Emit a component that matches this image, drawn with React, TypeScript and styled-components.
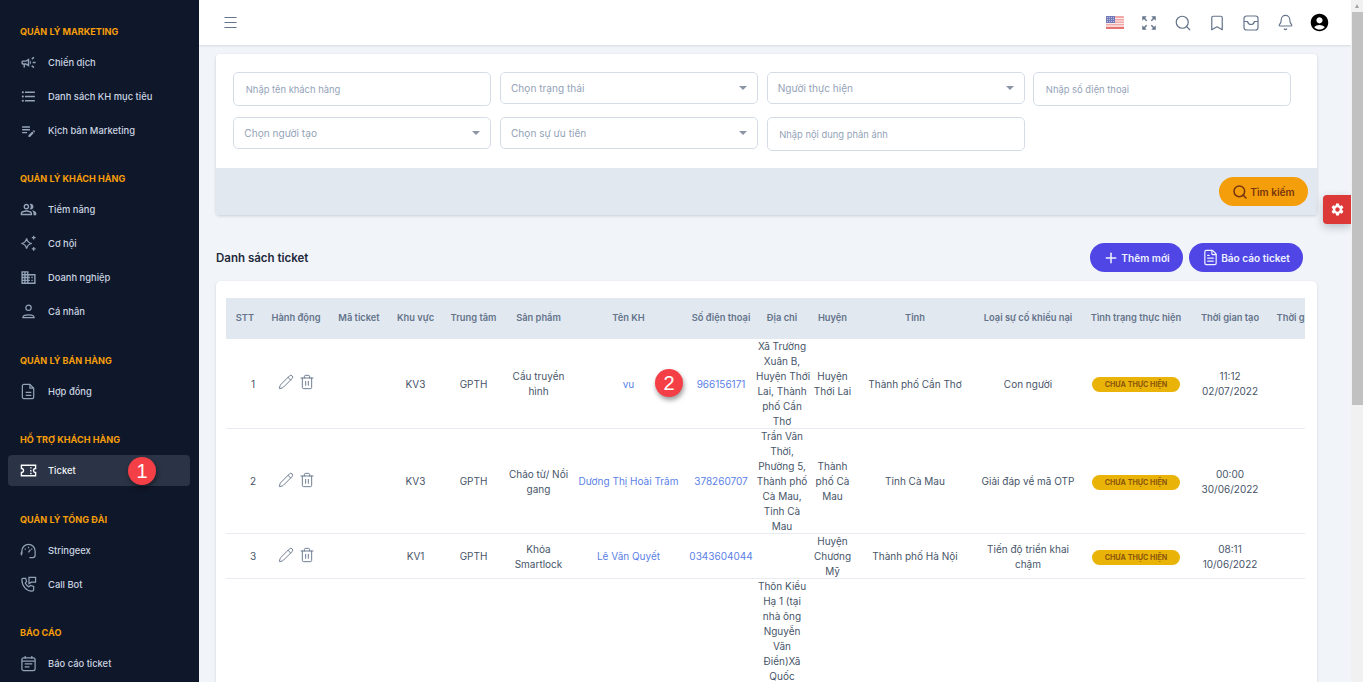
import React from "react";
import styled, { createGlobalStyle } from "styled-components";
import { Bell, Bookmark, FileText, Menu, Pencil, Plus, Search, Trash2 } from "lucide-react";
import {
  MdAccountCircle,
  MdOutlineCampaign,
  MdOutlineDomain,
  MdOutlineEditNote,
  MdOutlineFormatListBulleted,
  MdOutlinePeopleAlt,
  MdOutlineZoomOutMap,
  MdSettings,
} from "react-icons/md";

const FONT = `Inter, "Noto Sans", "Liberation Sans", sans-serif`;

const GlobalStyle = createGlobalStyle`
  html, body {
    margin: 0;
    height: 100%;
    overflow: hidden;
    background: #f1f5f9;
    font-family: ${FONT};
  }
  * { box-sizing: border-box; }
`;

const SparkIcon = () => (
  <svg viewBox="0 0 18 18" fill="none" stroke="currentColor" strokeWidth="1.3">
    <path d="M7 3.500c.6 3.200 2.200 4.900 5.500 5.500-3.300.6-4.900 2.300-5.500 5.500-.6-3.200-2.200-4.900-5.500-5.500 3.300-.6 4.900-2.300 5.500-5.500z" />
    <path d="M14.500 .8v4M12.500 2.800h4M14.500 12.800v4M12.500 14.800h4" />
  </svg>
);

const PersonIcon = () => (
  <svg viewBox="0 0 18 18" fill="none" stroke="currentColor" strokeWidth="1.3">
    <circle cx="9" cy="5" r="2.800" />
    <path d="M3 15.500c0-2 2-3 6-3s6 1 6 3z" />
  </svg>
);

const DocIcon = () => (
  <svg viewBox="0 0 18 18" fill="none" stroke="currentColor" strokeWidth="1.3">
    <path d="M4 1.500h6.500l4 4V15a1.500 1.500 0 0 1-1.500 1.500H4A1.500 1.500 0 0 1 2.500 15V3A1.500 1.500 0 0 1 4 1.500z" />
    <path d="M10.500 1.500v4h4M6 10h6M6 13h6" />
  </svg>
);

const TicketIcon = () => (
  <svg viewBox="0 0 18 18" fill="none" stroke="currentColor" strokeWidth="1.500">
    <path d="M1.500 3.500h15v3.300a2.200 2.200 0 0 0 0 4.400v3.300h-15v-3.300a2.200 2.200 0 0 0 0-4.400z" />
    <path d="M11.500 5.500v1.500M11.500 8.500v1.500M11.500 11.500v1.500" />
  </svg>
);

const HeadsetIcon = () => (
  <svg viewBox="0 0 18 18" fill="none" stroke="currentColor" strokeWidth="1.300">
    <path d="M2 13V9.500a7 7 0 0 1 14 0V14c0 1.500-1 2.500-2.500 2.500H10" />
    <path d="M2 10.500c-1 .5-1 3 0 3.500M5 7l1 1M9 5v1.500M13 7l-1 1M9 11l2-3" />
  </svg>
);

const CallBotIcon = () => (
  <svg viewBox="0 0 18 18" fill="none" stroke="currentColor" strokeWidth="1.300">
    <path d="M3 2.500h3l1 3.500-1.500 1.500c.8 1.800 2.200 3.200 4 4L11 10l3.500 1v3c0 1-1 2-2 2C7 16 2 11 2 4c0-1 .5-1.500 1-1.500z" />
    <path d="M9.500 1.500h7v5h-4.500l-2.500 1.500z" />
  </svg>
);

const ReportIcon = () => (
  <svg viewBox="0 0 18 18" fill="none" stroke="currentColor" strokeWidth="1.300">
    <rect x="2" y="3" width="14" height="13.500" rx="2" />
    <path d="M5.500 1v3M12.500 1v3M2 6.500h14M5 9.500h8M5 12.500h5" />
  </svg>
);

const InboxIcon = () => (
  <svg viewBox="0 0 18 18" width="18" height="18" fill="none" stroke="currentColor" strokeWidth="1.200">
    <rect x="2" y="2" width="14" height="14" rx="2.500" />
    <path d="M2 7.500h3.500c.5 2 2 3 3.500 3s3-1 3.500-3H16" />
  </svg>
);

const FlagIcon = () => (
  <svg viewBox="0 0 18 13" width="18" height="13">
    <rect width="18" height="13" rx="1" fill="#f1a8a8" />
    <path d="M0 2.500h18M0 5h18M0 7.500h18" stroke="#fbe9e9" strokeWidth="1" />
    <path d="M0 10h18" stroke="#fff" strokeWidth="1" />
    <path d="M0 12h18" stroke="#e15b5b" strokeWidth="1.400" />
    <rect width="9" height="7" fill="#7179b8" />
    <path d="M1 1.500h7M1 3.500h7M1 5.500h7" stroke="#d5d8ee" strokeWidth=".8" strokeDasharray="1 1" />
  </svg>
);

type NavEntry = { label: string; icon: React.ReactNode; active?: boolean };
type NavGroup = { title: string; items: NavEntry[] };

const NAV: NavGroup[] = [
  {
    title: "QUẢN LÝ MARKETING",
    items: [
      { label: "Chiến dịch", icon: <MdOutlineCampaign /> },
      { label: "Danh sách KH mục tiêu", icon: <MdOutlineFormatListBulleted /> },
      { label: "Kịch bản Marketing", icon: <MdOutlineEditNote /> },
    ],
  },
  {
    title: "QUẢN LÝ KHÁCH HÀNG",
    items: [
      { label: "Tiềm năng", icon: <MdOutlinePeopleAlt /> },
      { label: "Cơ hội", icon: <SparkIcon /> },
      { label: "Doanh nghiệp", icon: <MdOutlineDomain /> },
      { label: "Cá nhân", icon: <PersonIcon /> },
    ],
  },
  { title: "QUẢN LÝ BÁN HÀNG", items: [{ label: "Hợp đồng", icon: <DocIcon /> }] },
  { title: "HỖ TRỢ KHÁCH HÀNG", items: [{ label: "Ticket", icon: <TicketIcon />, active: true }] },
  {
    title: "QUẢN LÝ TỔNG ĐÀI",
    items: [
      { label: "Stringeex", icon: <HeadsetIcon /> },
      { label: "Call Bot", icon: <CallBotIcon /> },
    ],
  },
  { title: "BÁO CÁO", items: [{ label: "Báo cáo ticket", icon: <ReportIcon /> }] },
];

const COLUMNS = [
  { title: "STT", width: 38 },
  { title: "Hành động", width: 64 },
  { title: "Mã ticket", width: 62 },
  { title: "Khu vực", width: 51 },
  { title: "Trung tâm", width: 65 },
  { title: "Sản phẩm", width: 65 },
  { title: "Tên KH", width: 115 },
  { title: "Số điện thoại", width: 70 },
  { title: "Địa chỉ", width: 52 },
  { title: "Huyện", width: 49 },
  { title: "Tỉnh", width: 116 },
  { title: "Loại sự cố khiếu nại", width: 110 },
  { title: "Tình trạng thực hiện", width: 106 },
  { title: "Thời gian tạo", width: 82 },
  { title: "Thời gian cập nhật", width: 94 },
];

type Ticket = {
  no: number;
  area?: string;
  center?: string;
  product?: string;
  name?: string;
  phone?: string;
  address: string;
  district?: string;
  province?: string;
  issue?: string;
  time?: string;
};

const TICKETS: Ticket[] = [
  {
    no: 1,
    area: "KV3",
    center: "GPTH",
    product: "Cầu truyền\nhình",
    name: "vu",
    phone: "966156171",
    address: "Xã Trường\nXuân B,\nHuyện Thới\nLai, Thành\nphố Cần\nThơ",
    district: "Huyện\nThới Lai",
    province: "Thành phố Cần Thơ",
    issue: "Con người",
    time: "11:12\n02/07/2022",
  },
  {
    no: 2,
    area: "KV3",
    center: "GPTH",
    product: "Chảo từ/ Nồi\ngang",
    name: "Dương Thị Hoài Trâm",
    phone: "378260707",
    address: "Trần Văn\nThời,\nPhường 5,\nThành phố\nCà Mau,\nTỉnh Cà\nMau",
    district: "Thành\nphố Cà\nMau",
    province: "Tỉnh Cà Mau",
    issue: "Giải đáp về mã OTP",
    time: "00:00\n30/06/2022",
  },
  {
    no: 3,
    area: "KV1",
    center: "GPTH",
    product: "Khóa\nSmartlock",
    name: "Lê Văn Quyết",
    phone: "0343604044",
    address: "",
    district: "Huyện\nChương\nMỹ",
    province: "Thành phố Hà Nội",
    issue: "Tiến độ triển khai\nchậm",
    time: "08:11\n10/06/2022",
  },
  {
    no: 4,
    address: "Thôn Kiều\nHạ 1 (tại\nnhà ông\nNguyễn\nVăn\nĐiền)Xã\nQuốc\nOai",
  },
];

const Page = styled.div`
  position: relative;
  display: flex;
  height: 682px;
  overflow: hidden;
`;

const Sidebar = styled.aside`
  flex: 0 0 199px;
  padding-top: 24.6px;
  background: #0f172a;
`;

const GroupTitle = styled.div`
  height: 14px;
  margin: 0 0 8px 20px;
  color: #f59e0b;
  font-size: 9.1px;
  font-weight: 700;
  line-height: 14px;
`;

const Group = styled.div`
  display: flex;
  flex-direction: column;
  gap: 3px;
  margin-bottom: 26.5px;
`;

const NavItem = styled.div<{ $active?: boolean }>`
  display: flex;
  align-items: center;
  gap: 11px;
  height: 31px;
  margin: 0 9px 0 8px;
  padding-left: 12px;
  border-radius: 4px;
  background: ${(p) => (p.$active ? "#2b3446" : "transparent")};
  color: ${(p) => (p.$active ? "#f1f5f9" : "#cbd5e1")};
  font-size: 9.4px;
  font-weight: 500;

  svg {
    flex: none;
    width: 17px;
    height: 17px;
    color: ${(p) => (p.$active ? "#f8fafc" : "#94a3b8")};
  }
`;

const Main = styled.main`
  position: relative;
  display: flex;
  flex: 1;
  flex-direction: column;
  min-width: 0;
`;

const TopBar = styled.header`
  display: flex;
  flex: 0 0 45px;
  align-items: center;
  justify-content: space-between;
  padding: 0 15px 0 23px;
  background: #fff;
  box-shadow: 0 1px 2px rgba(15, 23, 42, 0.12);
  color: #64748b;
`;

const TopIcons = styled.div`
  display: flex;
  align-items: center;
`;

const TopIcon = styled.span<{ $dark?: boolean }>`
  display: flex;
  align-items: center;
  justify-content: center;
  width: 34px;
  height: 30px;
  color: ${(p) => (p.$dark ? "#000" : "#64748b")};
`;

const Content = styled.div`
  display: flex;
  flex: 1;
  flex-direction: column;
  min-height: 0;
  padding: 9px 34px 0 17px;
`;

const FilterCard = styled.section`
  flex: none;
  overflow: hidden;
  border-radius: 4px;
  background: #fff;
  box-shadow: 0 1px 3px rgba(15, 23, 42, 0.18);
`;

const FilterGrid = styled.div`
  display: grid;
  grid-template-columns: repeat(4, 258px);
  column-gap: 8.7px;
  row-gap: 11px;
  align-items: start;
  padding: 18px 17px 17px 17.3px;
`;

const TextField = styled.div`
  display: flex;
  align-items: center;
  height: 34px;
  padding-left: 11.5px;
  border: 1px solid #d5dce7;
  border-radius: 5px;
  color: #94a3b8;
  font-size: 9.4px;
`;

const SelectField = styled(TextField)`
  justify-content: space-between;
  height: 32px;
  padding: 0 10px;
  font-size: 10.1px;

  &::after {
    content: "";
    border-top: 4px solid #8b95a5;
    border-left: 4px solid transparent;
    border-right: 4px solid transparent;
  }
`;

const FilterFooter = styled.div`
  display: flex;
  justify-content: flex-end;
  height: 47px;
  padding: 9px;
  background: #e2e8f0;
`;

const PillButton = styled.button<{ $tone: "amber" | "indigo" }>`
  display: flex;
  align-items: center;
  justify-content: center;
  gap: 2px;
  height: 29px;
  padding: 0;
  border: 0;
  border-radius: 15px;
  background: ${(p) => (p.$tone === "amber" ? "#f59e0b" : "#4f46e5")};
  color: ${(p) => (p.$tone === "amber" ? "#78350f" : "#eef2ff")};
  font-family: ${FONT};
  font-size: 10.1px;
  font-weight: 600;
`;

const SearchButton = styled(PillButton)`
  width: 89px;
`;

const AddButton = styled(PillButton)`
  width: 93px;
`;

const ReportButton = styled(PillButton)`
  width: 114px;
`;

const ListHead = styled.div`
  display: flex;
  flex: none;
  align-items: center;
  justify-content: space-between;
  height: 29px;
  margin-top: 28px;
  padding-right: 14px;
`;

const ListTitle = styled.h2`
  margin: 0;
  color: #1e293b;
  font-size: 11.5px;
  font-weight: 600;
`;

const ListActions = styled.div`
  display: flex;
  gap: 6px;
`;

const TableCard = styled.section`
  flex: 1;
  margin-top: 9px;
  padding: 17px 12px 0 10px;
  border-radius: 5px 5px 0 0;
  background: #fff;
  box-shadow: 0 1px 3px rgba(15, 23, 42, 0.15);
  overflow: hidden;
`;

const TableClip = styled.div`
  overflow: hidden;
`;

const Table = styled.table`
  width: 1139px;
  border-collapse: separate;
  border-spacing: 0;
  table-layout: fixed;
  color: #475569;
  font-size: 10px;
  line-height: 15px;
  text-align: center;
`;

const HeadCell = styled.th`
  height: 41px;
  padding: 0 0 3px;
  background: #e2e8f0;
  color: #64748b;
  font-size: 9.3px;
  font-weight: 600;
  white-space: nowrap;
`;

const Cell = styled.td`
  padding: 0;
  box-shadow: inset 0 -1px 0 #e8ecf2;
  white-space: pre;
  vertical-align: middle;
`;

const NumberCell = styled(Cell)`
  padding-left: 16px;
`;

const LinkCell = styled(Cell)`
  color: #5b7fe6;
`;

const ActionIcons = styled.div`
  display: flex;
  justify-content: center;
  gap: 5px;
  margin-top: -4px;
  color: #64748b;
`;

const StatusPill = styled.span`
  display: inline-block;
  width: 88px;
  height: 15px;
  border-radius: 8px;
  background: #eab308;
  color: #8a560a;
  font-size: 7.2px;
  font-weight: 700;
  line-height: 15px;
`;

const GearTab = styled.div`
  position: absolute;
  top: 195px;
  right: 0;
  display: flex;
  align-items: center;
  justify-content: center;
  width: 28px;
  height: 29px;
  border-radius: 4px 0 0 4px;
  background: #dc3838;
  box-shadow: 0 3px 8px rgba(15, 23, 42, 0.25);
  color: #fff;
`;

const Callout = styled.div<{ $left: number; $top: number }>`
  position: absolute;
  left: ${(p) => p.$left}px;
  top: ${(p) => p.$top}px;
  width: 28px;
  height: 28px;
  border-radius: 50%;
  background: #f43f46;
  box-shadow: 1px 3px 5px rgba(0, 0, 0, 0.4);
  color: #fff;
  font-family: "Liberation Sans", Arial, sans-serif;
  font-size: 20px;
  line-height: 28px;
  text-align: center;
`;

const Scrollbar = styled.div`
  position: relative;
  flex: 0 0 12px;
  padding-top: 12px;
  background: #f1f1f1;

  &::before {
    content: "";
    position: absolute;
    top: 4px;
    left: 3.5px;
    border-bottom: 4px solid #a3a3a3;
    border-left: 2.5px solid transparent;
    border-right: 2.5px solid transparent;
  }
`;

const ScrollThumb = styled.div`
  height: 393px;
  margin-left: 1px;
  background: #c1c1c1;
`;

const RowActions = () => (
  <ActionIcons>
    <Pencil size={16} strokeWidth={1.4} />
    <Trash2 size={16} strokeWidth={1.4} />
  </ActionIcons>
);

const App: React.FC = () => {
  return (
    <Page>
      <GlobalStyle />
      <Sidebar>
        {NAV.map((group) => (
          <div key={group.title}>
            <GroupTitle>{group.title}</GroupTitle>
            <Group>
              {group.items.map((item) => (
                <NavItem key={item.label} $active={item.active}>
                  {item.icon}
                  {item.label}
                </NavItem>
              ))}
            </Group>
          </div>
        ))}
      </Sidebar>

      <Main>
        <TopBar>
          <Menu size={17} strokeWidth={1.5} />
          <TopIcons>
            <TopIcon><FlagIcon /></TopIcon>
            <TopIcon><MdOutlineZoomOutMap size={18} /></TopIcon>
            <TopIcon><Search size={18} strokeWidth={1.6} /></TopIcon>
            <TopIcon><Bookmark size={18} strokeWidth={1.6} /></TopIcon>
            <TopIcon><InboxIcon /></TopIcon>
            <TopIcon><Bell size={17} strokeWidth={1.6} /></TopIcon>
            <TopIcon $dark><MdAccountCircle size={21} /></TopIcon>
          </TopIcons>
        </TopBar>

        <Content>
          <FilterCard>
            <FilterGrid>
              <TextField>Nhập tên khách hàng</TextField>
              <SelectField>Chọn trạng thái</SelectField>
              <SelectField>Người thực hiện</SelectField>
              <TextField>Nhập số điện thoại</TextField>
              <SelectField>Chọn người tạo</SelectField>
              <SelectField>Chọn sự ưu tiên</SelectField>
              <TextField>Nhập nội dung phản ánh</TextField>
            </FilterGrid>
            <FilterFooter>
              <SearchButton $tone="amber">
                <Search size={16} strokeWidth={2.3} />
                Tìm kiếm
              </SearchButton>
            </FilterFooter>
          </FilterCard>

          <ListHead>
            <ListTitle>Danh sách ticket</ListTitle>
            <ListActions>
              <AddButton $tone="indigo">
                <Plus size={16} strokeWidth={2.3} />
                Thêm mới
              </AddButton>
              <ReportButton $tone="indigo">
                <FileText size={17} strokeWidth={1.7} />
                Báo cáo ticket
              </ReportButton>
            </ListActions>
          </ListHead>

          <TableCard>
            <TableClip>
              <Table>
                <colgroup>
                  {COLUMNS.map((col) => (
                    <col key={col.title} width={col.width} />
                  ))}
                </colgroup>
                <thead>
                  <tr>
                    {COLUMNS.map((col) => (
                      <HeadCell key={col.title}>{col.title}</HeadCell>
                    ))}
                  </tr>
                </thead>
                <tbody>
                  {TICKETS.map((t) => (
                    <tr key={t.no}>
                      <NumberCell>{t.area ? t.no : ""}</NumberCell>
                      <Cell>{t.area ? <RowActions /> : null}</Cell>
                      <Cell />
                      <Cell>{t.area}</Cell>
                      <Cell>{t.center}</Cell>
                      <Cell>{t.product}</Cell>
                      <LinkCell>{t.name}</LinkCell>
                      <LinkCell>{t.phone}</LinkCell>
                      <Cell>{t.address}</Cell>
                      <Cell>{t.district}</Cell>
                      <Cell>{t.province}</Cell>
                      <Cell>{t.issue}</Cell>
                      <Cell>{t.area ? <StatusPill>CHƯA THỰC HIỆN</StatusPill> : null}</Cell>
                      <Cell>{t.time}</Cell>
                      <Cell />
                    </tr>
                  ))}
                </tbody>
              </Table>
            </TableClip>
          </TableCard>
        </Content>

        <GearTab>
          <MdSettings size={15} />
        </GearTab>
      </Main>

      <Scrollbar>
        <ScrollThumb />
      </Scrollbar>

      <Callout $left={128} $top={457}>1</Callout>
      <Callout $left={655} $top={369}>2</Callout>
    </Page>
  );
};

export default App;
